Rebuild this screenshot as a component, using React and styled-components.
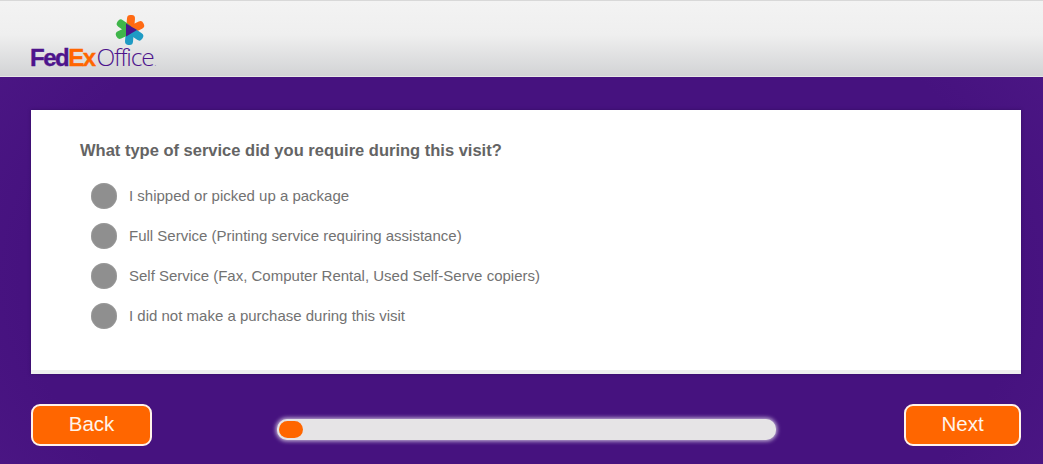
import React from "react";
import styled, { createGlobalStyle } from "styled-components";

const GlobalStyle = createGlobalStyle`
  html, body {
    margin: 0;
    padding: 0;
    background: #46127d;
    font-family: "Liberation Sans", Arial, sans-serif;
  }
`;

const Page = styled.div`
  width: 1043px;
  height: 464px;
  display: flex;
  flex-direction: column;
  overflow: hidden;
  background: radial-gradient(ellipse 640px 420px at 50% 60%, #46127f 78%, #4c1785 100%);
`;

const Header = styled.header`
  height: 75px;
  flex: none;
  border-top: 1px solid #d8d8d8;
  border-bottom: 1px solid #e6e6e6;
  background: linear-gradient(#f3f3f3 0%, #efefef 45%, #d2d3d5 100%);
  padding-left: 30px;
  box-sizing: content-box;
`;

const Logo = styled.div`
  width: 128px;
  height: 75px;
  display: flex;
  flex-direction: column;
  align-items: flex-end;
`;

const Star = styled.svg`
  width: 32px;
  height: 32px;
  margin: 13px 12px 0 0;
  flex: none;
`;

const Wordmark = styled.div`
  margin-top: -2px;
  width: 128px;
  display: flex;
  align-items: baseline;
  line-height: 26px;
  white-space: nowrap;
`;

const Fed = styled.span`
  font-weight: 700;
  color: #4d148c;
  font-size: 24px;
  letter-spacing: -1.5px;
  -webkit-text-stroke: 0.4px #4d148c;
`;

const Ex = styled.span`
  font-weight: 700;
  color: #ff6600;
  font-size: 24px;
  letter-spacing: -1.5px;
  margin-right: 2px;
  -webkit-text-stroke: 0.4px #ff6600;
`;

const Office = styled.span`
  color: #4d148c;
  font-family: "Open Sans", sans-serif;
  font-weight: 300;
  font-size: 24.5px;
  letter-spacing: -1.2px;
`;

const Dot = styled.span`
  color: #4d148c;
  font-size: 6px;
  margin-left: 1px;
`;

const Main = styled.main`
  flex: 1;
  display: flex;
  flex-direction: column;
  padding: 33px 22px 18px 31px;
`;

const Card = styled.section`
  height: 264px;
  flex: none;
  box-sizing: border-box;
  background: #fff;
  border-bottom: 4px solid #eeeeee;
  padding: 30px 49px 0;
  box-shadow: 0 0 3px rgba(40, 10, 80, 0.6);
`;

const Question = styled.h2`
  margin: 0 0 23px;
  font-size: 16.5px;
  line-height: 20px;
  font-weight: 700;
  color: #646464;
`;

const Options = styled.div`
  display: flex;
  flex-direction: column;
  gap: 14px;
  padding-left: 11px;
`;

const Option = styled.label`
  display: flex;
  align-items: center;
  gap: 12px;
  height: 26px;
  font-size: 15px;
  color: #727272;
`;

const OptionText = styled.span`
  margin-bottom: 2px;
`;

const Radio = styled.span`
  width: 26px;
  height: 26px;
  border-radius: 50%;
  background: #8f8f8f;
  box-shadow: inset 0 0 2px #a8a8a8;
  flex: none;
`;

const Footer = styled.footer`
  margin-top: 30px;
  height: 42px;
  display: flex;
  align-items: flex-start;
  justify-content: space-between;
`;

const NavButton = styled.button`
  width: ${(props) => props.$width}px;
  height: 42px;
  box-sizing: border-box;
  background: #ff6600;
  border: 2px solid #fff3ea;
  border-radius: 9px;
  color: #fff4ea;
  font-family: "Liberation Sans", Arial, sans-serif;
  font-size: 20.5px;
  padding: 0 0 3px;
`;

const Progress = styled.div`
  width: 499px;
  height: 21px;
  margin: 15px 7px 0 4px;
  box-sizing: border-box;
  border-radius: 10px;
  background: #e6e4e6;
  box-shadow: 0 0 4px 1px rgba(255, 255, 255, 0.75);
  padding: 2px;
`;

const ProgressFill = styled.div`
  height: 17px;
  border-radius: 9px;
  background: #ff6600;
`;

const options = [
  "I shipped or picked up a package",
  "Full Service (Printing service requiring assistance)",
  "Self Service (Fax, Computer Rental, Used Self-Serve copiers)",
  "I did not make a purchase during this visit",
];

// six petals around a purple play shape
const petals = [
  { angle: 5, color: "#ff6a13" },
  { angle: 65, color: "#ff6a13" },
  { angle: 125, color: "#1f9bc4" },
  { angle: 185, color: "#1f9bc4" },
  { angle: 245, color: "#3fb54a" },
  { angle: 305, color: "#3fb54a" },
];

function FedExStar() {
  return (
    <Star viewBox="0 0 32 32">
      {petals.map((p) => (
        <rect
          key={p.angle}
          x="12"
          y="1"
          width="8"
          height="15"
          rx="3.5"
          fill={p.color}
          transform={`rotate(${p.angle} 16 16)`}
        />
      ))}
      <path d="M12 9.5 L23 16 L12 22.5 Z" fill="#4d148c" />
    </Star>
  );
}

export default function App() {
  return (
    <Page>
      <GlobalStyle />
      <Header>
        <Logo>
          <FedExStar />
          <Wordmark>
            <Fed>Fed</Fed>
            <Ex>Ex</Ex>
            <Office>Office</Office>
            <Dot>.</Dot>
          </Wordmark>
        </Logo>
      </Header>
      <Main>
        <Card>
          <Question>What type of service did you require during this visit?</Question>
          <Options>
            {options.map((text) => (
              <Option key={text}>
                <Radio />
                <OptionText>{text}</OptionText>
              </Option>
            ))}
          </Options>
        </Card>
        <Footer>
          <NavButton $width={121}>Back</NavButton>
          <Progress>
            <ProgressFill style={{ width: `${(24 / 495) * 100}%` }} />
          </Progress>
          <NavButton $width={117}>Next</NavButton>
        </Footer>
      </Main>
    </Page>
  );
}
